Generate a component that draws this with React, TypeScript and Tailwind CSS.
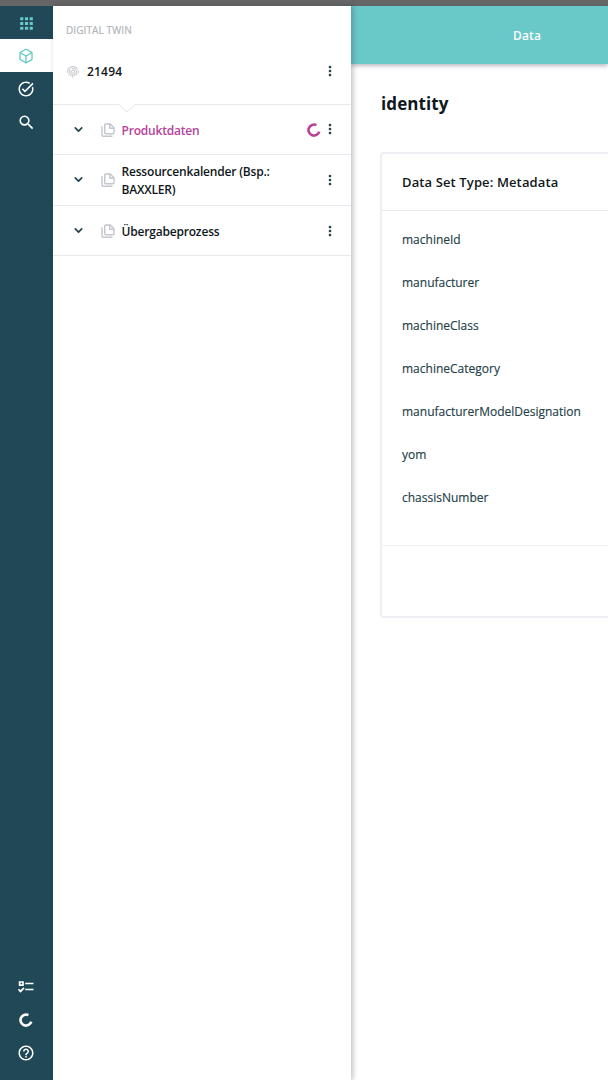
import type { ReactNode } from 'react';
import { MdApps, MdTaskAlt, MdSearch, MdHelpOutline, MdMoreVert } from 'react-icons/md';
import { FaFingerprint } from 'react-icons/fa';
import { FiBox, FiChevronDown } from 'react-icons/fi';

const fields = [
  'machineId',
  'manufacturer',
  'machineClass',
  'machineCategory',
  'manufacturerModelDesignation',
  'yom',
  'chassisNumber',
];

function Ring({ className, size }: { className?: string; size: number }) {
  return (
    <svg className={className} width={size} height={size} viewBox="0 0 14 14" fill="none" stroke="currentColor" strokeWidth="2.6">
      <path d="M9.4 2.1A5.5 5.5 0 1 0 12.3 8.6" />
    </svg>
  );
}

function FilesIcon() {
  return (
    <svg className="shrink-0 text-[#c3c6cd]" width="14" height="14" viewBox="0 0 14 14" fill="none" stroke="currentColor" strokeWidth="1.4" strokeLinejoin="round">
      <path d="M4.7 1H9.3L13 4.7V9.8Q13 10.8 12 10.8H4.7Q3.7 10.8 3.7 9.8V2Q3.7 1 4.7 1Z" />
      <path d="M8.8 1V5.2H13" />
      <path d="M1 3.2V12.3Q1 13.3 2 13.3H11.4" />
    </svg>
  );
}

function ChecklistIcon() {
  return (
    <svg width="16" height="14" viewBox="0 0 16 14" fill="none" stroke="currentColor" strokeWidth="1.7">
      <path d="M1.6 2H5V5.2H1.6Z" />
      <path d="M7.2 3.5H15.5M7.2 9.5H15.5" />
      <path d="M.5 9.2L2.5 11.4L6 7.8" />
    </svg>
  );
}

function RailItem({ children, active }: { children: ReactNode; active?: boolean }) {
  return (
    <div className={active ? 'flex h-[33px] items-center justify-center bg-white pr-px text-[#69c8c8]' : 'flex h-[33px] items-center justify-center pr-px text-white'}>
      {children}
    </div>
  );
}

function TreeRow({ label, active }: { label: string; active?: boolean }) {
  return (
    <div className="flex h-[50.67px] items-center border-b border-[#e8e9ee] pl-[19px] pr-[13px] pt-[1px]">
      <FiChevronDown className="mb-px shrink-0 text-[#20414d]" size={13} strokeWidth={3} />
      <div className="ml-[16px] flex w-[20.5px] shrink-0 items-center">
        <FilesIcon />
      </div>
      <span className={active ? 'w-[165px] pt-px text-[12px] leading-[17.5px] font-semibold tracking-[-0.2px] text-[#b8429a]' : 'w-[165px] pt-px text-[12px] leading-[17.5px] font-semibold tracking-[-0.19px] text-[#101720]'}>
        {label}
      </span>
      <div className="ml-auto flex items-center">
        {active && <Ring className="mr-px text-[#b8429a]" size={14} />}
        <MdMoreVert className="mb-px text-[#20414d]" size={16} />
      </div>
    </div>
  );
}

export default function App() {
  return (
    <div className="flex h-[1080px] w-[608px] flex-col overflow-hidden bg-white font-['Open_Sans',sans-serif]">
      <div className="h-[6px] shrink-0 bg-[#666666]" />
      <div className="flex min-h-0 flex-1">
        <nav className="flex w-[53px] shrink-0 flex-col bg-[#204857] pb-[11px]">
          <RailItem><MdApps className="mt-px text-[#69c8c8]" size={19} /></RailItem>
          <RailItem active><FiBox size={16} strokeWidth={2} /></RailItem>
          <RailItem><MdTaskAlt size={18} /></RailItem>
          <RailItem><MdSearch className="mt-px" size={19} /></RailItem>
          <div className="flex-1" />
          <RailItem><ChecklistIcon /></RailItem>
          <RailItem><Ring size={14} /></RailItem>
          <RailItem><MdHelpOutline size={18} /></RailItem>
        </nav>
        <aside className="z-10 w-[298px] shrink-0 bg-white shadow-[2px_0_5px_rgba(30,30,60,0.28)]">
          <div className="relative h-[98.5px] border-b border-[#e8e9ee] pl-[13px] pr-[13px] pt-[16px]">
            <div className="text-[10px] leading-[16px] tracking-[0.08px] text-[#b1b5ba] [-webkit-text-stroke:0.2px]">DIGITAL TWIN</div>
            <div className="mt-[23px] flex h-[20px] items-center">
              <FaFingerprint className="ml-px mt-px text-[#cbccd0]" size={12} />
              <span className="ml-[8px] pt-[2px] text-[12px] font-semibold tracking-[0.2px] text-[#101720]">21494</span>
              <MdMoreVert className="ml-auto text-[#20414d]" size={16} />
            </div>
            <svg className="absolute top-[97px] left-[65px]" width="18" height="10" viewBox="0 0 18 10">
              <path d="M0 0H18V1L9 9L0 1Z" fill="white" />
              <path d="M0 .8L9 9L18 .8" fill="none" stroke="#e4e5eb" />
            </svg>
          </div>
          <TreeRow label="Produktdaten" active />
          <TreeRow label="Ressourcenkalender (Bsp.: BAXXLER)" />
          <TreeRow label="Übergabeprozess" />
        </aside>
        <main className="min-w-0 flex-1">
          <header className="flex h-[58px] items-center bg-[#69c8c8] pt-px pl-[162px] text-[12px] font-semibold tracking-[0.15px] text-white shadow-[0_2px_4px_rgba(30,30,60,0.3)]">
            Data
          </header>
          <h1 className="mt-[28px] ml-[30px] text-[17px] leading-[24px] font-bold tracking-[0.1px] text-[#101720]">identity</h1>
          <section className="mt-[36px] ml-[29px] h-[466px] w-[300px] rounded-[4px] border-2 border-[#edeff3]">
            <h2 className="flex h-[57px] items-center border-b border-[#e8e9ee] pt-[2px] pl-[20px] text-[13px] font-semibold tracking-[0.12px] text-[#101720]">Data Set Type: Metadata</h2>
            <div className="h-[335px] border-b border-[#eff1f5] pt-[8px] pl-[20px] text-[12px] text-[#244048] [-webkit-text-stroke:0.15px]">
              {fields.map((field) => (
                <div key={field} className="flex h-[42.9px] items-center">{field}</div>
              ))}
            </div>
          </section>
        </main>
      </div>
    </div>
  );
}
